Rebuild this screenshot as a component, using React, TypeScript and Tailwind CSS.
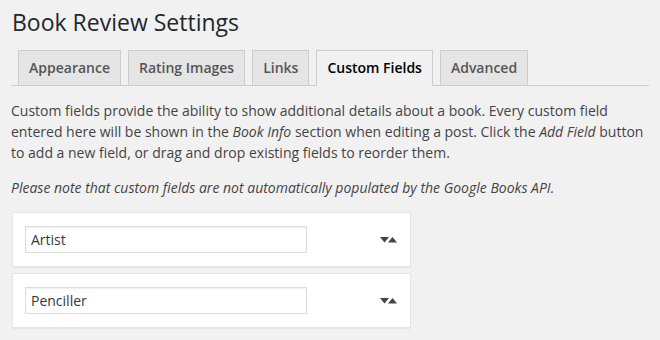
const tabs = ["Appearance", "Rating Images", "Links", "Custom Fields", "Advanced"];
const fields = ["Artist", "Penciller"];

const SortArrows = () => (
  <svg width="18" height="6" viewBox="0 0 18 6" className="block">
    <polygon points="0,0 9,0 4.5,5.5" fill="#444" />
    <polygon points="8,5.5 17,5.5 12.5,0" fill="#444" />
  </svg>
);

const App = () => {
  return (
    <div
      className="h-[340px] w-[660px] overflow-hidden bg-[#f1f1f1] px-[11px] text-[14px] leading-[21px] text-[#444]"
      style={{ fontFamily: '"Open Sans", "Liberation Sans", sans-serif' }}
    >
      <h1 className="pt-[8px] pl-px text-[23px] font-normal leading-[29px] text-[#23282d]">
        Book Review Settings
      </h1>

      <div className="mt-[13px] flex border-b border-[#ccc] pl-[7px]">
        {tabs.map((t) => {
          const active = t === "Custom Fields";
          return (
            <div
              key={t}
              className={
                active
                  ? "-mb-px mr-[7px] border border-[#ccc] border-b-[#f1f1f1] bg-[#f1f1f1] px-[10px] py-[5px] text-[14px] font-semibold leading-[24px] text-black"
                  : "-mb-px mr-[7px] border border-[#ccc] bg-[#e5e5e5] px-[10px] py-[5px] text-[14px] font-semibold leading-[24px] text-[#555]"
              }
            >
              {t}
            </div>
          );
        })}
      </div>

      <p className="mt-[14px]">
        Custom fields provide the ability to show additional details about a
        book. Every custom field entered here will be shown in the <i>Book Info</i>{" "}
        section when editing a post. Click the <i>Add Field</i> button to add a
        new field, or drag and drop existing fields to reorder them.
      </p>

      <p className="mt-[14px] italic">
        Please note that custom fields are not automatically populated by the
        Google Books API.
      </p>

      <div className="mt-[14px] ml-px flex w-[399px] flex-col gap-[6px]">
        {fields.map((f) => (
          <div
            key={f}
            className="flex items-center justify-between border border-[#e5e5e5] bg-white py-[13px] pl-[12px] pr-[12px] shadow-[0_1px_1px_rgba(0,0,0,0.04)]"
          >
            <div className="h-[27px] w-[282px] border border-[#ddd] bg-white px-[5px] text-[14px] leading-[25px] text-[#32373c] shadow-[inset_0_1px_2px_rgba(0,0,0,0.07)]">
              {f}
            </div>
            <SortArrows />
          </div>
        ))}
      </div>
    </div>
  );
};

export default App;
